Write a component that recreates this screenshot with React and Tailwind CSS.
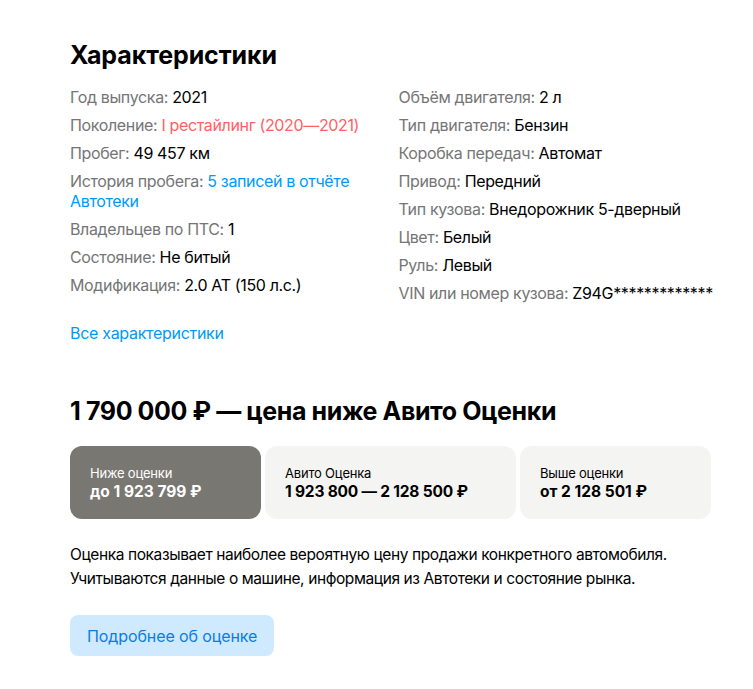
import React from "react";

const left = [
  { label: "Год выпуска", value: "2021" },
  { label: "Поколение", value: "I рестайлинг (2020—2021)", tone: "red" },
  { label: "Пробег", value: "49 457 км" },
  { label: "История пробега", value: "5 записей в отчёте Автотеки", tone: "blue" },
  { label: "Владельцев по ПТС", value: "1" },
  { label: "Состояние", value: "Не битый" },
  { label: "Модификация", value: "2.0 AT (150 л.с.)" },
];

const right = [
  { label: "Объём двигателя", value: "2 л" },
  { label: "Тип двигателя", value: "Бензин" },
  { label: "Коробка передач", value: "Автомат" },
  { label: "Привод", value: "Передний" },
  { label: "Тип кузова", value: "Внедорожник 5-дверный" },
  { label: "Цвет", value: "Белый" },
  { label: "Руль", value: "Левый" },
  { label: "VIN или номер кузова", value: "Z94G*************" },
];

function Row({ label, value, tone }) {
  const valueClass =
    tone === "red" ? "text-[#ff6163]" : tone === "blue" ? "text-[#0099f7]" : "text-black";
  return (
    <li className="text-[16px] leading-5 tracking-[-0.35px] text-[#757575]">
      {label}: <span className={valueClass}>{value}</span>
    </li>
  );
}

export default function App() {
  return (
    <div className="min-h-screen bg-white" style={{ fontFamily: "Inter, 'Noto Sans', sans-serif" }}>
      <div className="w-[641px] ml-[70px] pt-[39px]">
        {/* Specs */}
        <h2 className="text-[25px] leading-8 font-bold text-black tracking-[-0.1px]">Характеристики</h2>
        <div className="grid grid-cols-2 gap-x-4 mt-4">
          <ul className="flex flex-col gap-2">
            {left.map((r) => (
              <Row key={r.label} {...r} />
            ))}
          </ul>
          <ul className="flex flex-col gap-2 whitespace-nowrap">
            {right.map((r) => (
              <Row key={r.label} {...r} />
            ))}
          </ul>
        </div>
        <a className="block mt-5 text-[16px] leading-5 tracking-[-0.3px] text-[#0099f7]">Все характеристики</a>

        {/* Price */}
        <h2 className="mt-[53px] text-[25px] leading-[30px] font-bold text-black tracking-[-0.4px]">
          1 790 000 ₽ — цена ниже Авито Оценки
        </h2>
        <div className="flex gap-[4px] mt-5">
          <div className="w-[191px] h-[73px] rounded-xl bg-[#797772] px-5 flex flex-col justify-center text-white">
            <span className="text-[13px] leading-[18px] tracking-[-0.2px]">Ниже оценки</span>
            <span className="text-[15.5px] leading-5 font-bold">до 1 923 799 ₽</span>
          </div>
          <div className="w-[251px] h-[73px] rounded-xl bg-[#f4f4f3] px-5 flex flex-col justify-center text-black">
            <span className="text-[13px] leading-[18px] tracking-[-0.2px]">Авито Оценка</span>
            <span className="text-[15.5px] leading-5 font-bold tracking-[-0.2px]">1 923 800 — 2 128 500 ₽</span>
          </div>
          <div className="flex-1 h-[73px] rounded-xl bg-[#f4f4f3] px-5 flex flex-col justify-center text-black">
            <span className="text-[13px] leading-[18px] tracking-[-0.2px]">Выше оценки</span>
            <span className="text-[15.5px] leading-5 font-bold">от 2 128 501 ₽</span>
          </div>
        </div>

        <p className="mt-6 text-[15.5px] leading-6 tracking-[-0.4px] text-black whitespace-nowrap">
          Оценка показывает наиболее вероятную цену продажи конкретного автомобиля.
          <br />
          Учитываются данные о машине, информация из Автотеки и состояние рынка.
        </p>
        <button className="mt-6 h-[41px] px-[17px] rounded-lg bg-[#cfeaff] text-[16px] tracking-[-0.1px] text-[#0a7ce6]">
          Подробнее об оценке
        </button>
      </div>
    </div>
  );
}
